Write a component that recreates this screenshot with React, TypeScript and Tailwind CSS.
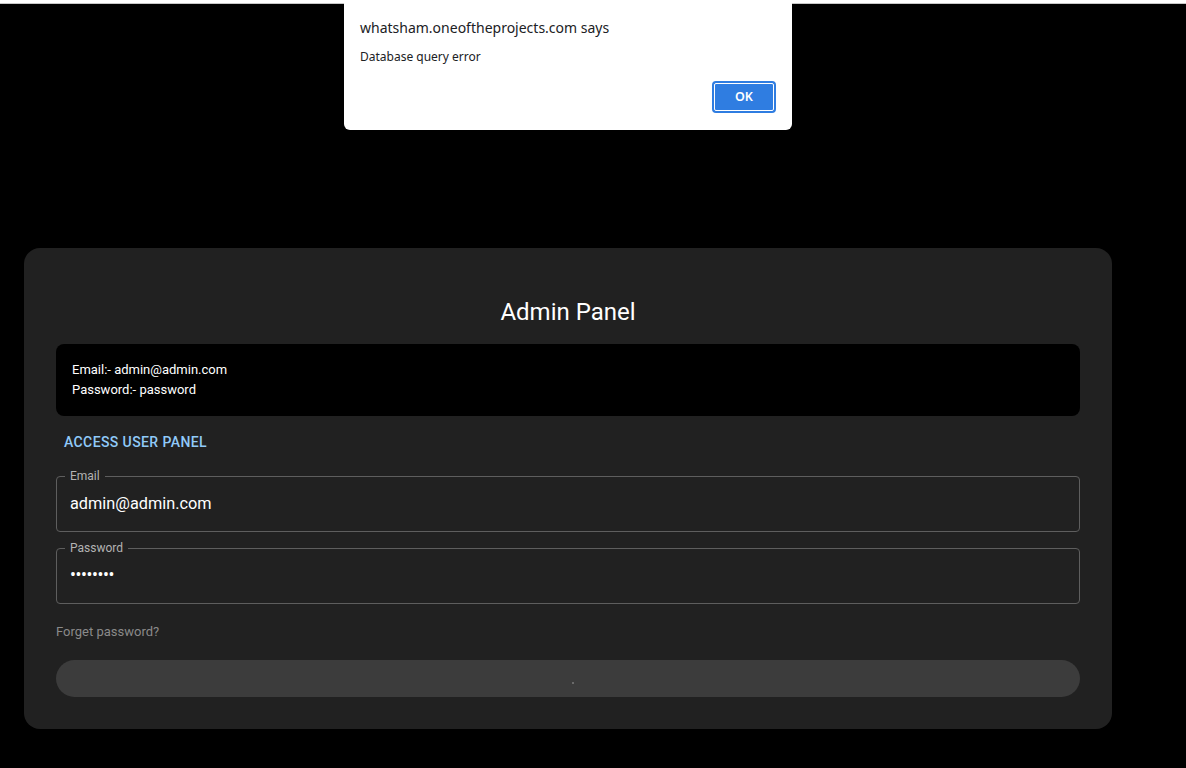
import React from "react";

export default function App() {
  return (
    <div className="relative min-h-[768px] w-[1186px] overflow-hidden bg-black" style={{ fontFamily: "Roboto, 'Noto Sans', sans-serif" }}>
      <div className="h-[4px] border-b border-[#c8c8c8] bg-white" />

      {/* Alert dialog */}
      <div
        className="absolute left-[344px] top-0 h-[130px] w-[448px] rounded-b-[6px] rounded-t-[4px] bg-white px-4 pt-[17px] text-[#202124]"
        style={{ fontFamily: "'Noto Sans', 'Open Sans', sans-serif" }}
      >
        <div className="text-[14px] leading-[22px] text-[#202124]">whatsham.oneoftheprojects.com says</div>
        <div className="mt-[9px] text-[12px] leading-[18px]">Database query error</div>
        <div className="mt-[15px] flex justify-end">
          <button className="flex h-[32px] w-[64px] items-center justify-center rounded-[4px] border-2 border-[#2f7de1] bg-[#2f7de1] text-[12.5px] font-semibold text-white outline outline-1 outline-offset-[-3px] outline-white">
            OK
          </button>
        </div>
      </div>

      {/* Card */}
      <div className="ml-[24px] mt-[244px] w-[1088px] rounded-[16px] bg-[#212121] px-8 pb-8 pt-8">
        <h1 className="mt-4 text-center text-[24px] leading-[32px] font-normal text-white">Admin Panel</h1>

        <div className="mt-4 rounded-[8px] bg-black px-4 py-4 text-[13px] leading-[20px] text-white">
          <div>Email:- admin@admin.com</div>
          <div>Password:- password</div>
        </div>

        <button className="mt-[8px] h-[36px] px-2 text-[14px] font-medium uppercase tracking-[0.4px] text-[#90caf9]">
          Access User Panel
        </button>

        <div className="relative mt-4 h-[56px] rounded-[4px] border border-[#5e5e5e]">
          <span className="absolute left-[8px] top-[-9px] bg-[#212121] px-[5px] text-[12px] leading-[16px] text-[#b3b3b3]">Email</span>
          <div className="flex h-full items-center px-[13px] text-[16.3px] text-white">admin@admin.com</div>
        </div>

        <div className="relative mt-4 h-[56px] rounded-[4px] border border-[#5e5e5e]">
          <span className="absolute left-[8px] top-[-9px] bg-[#212121] px-[5px] text-[12px] leading-[16px] text-[#b3b3b3]">Password</span>
          <div className="flex h-full items-center px-[13px] pb-[2px] text-[17.5px] tracking-[-0.4px] text-white">••••••••</div>
        </div>

        <div className="mt-5 text-[13px] leading-[16px] text-[#8a8a8a]">Forget password?</div>

        <div className="mt-5 flex h-[37px] items-center justify-center rounded-full bg-[#3c3c3c]">
          <span className="ml-[10px] mt-[8px] block h-[2px] w-[2px] rounded-full bg-[#7a7a7a]" />
        </div>
      </div>
    </div>
  );
}
